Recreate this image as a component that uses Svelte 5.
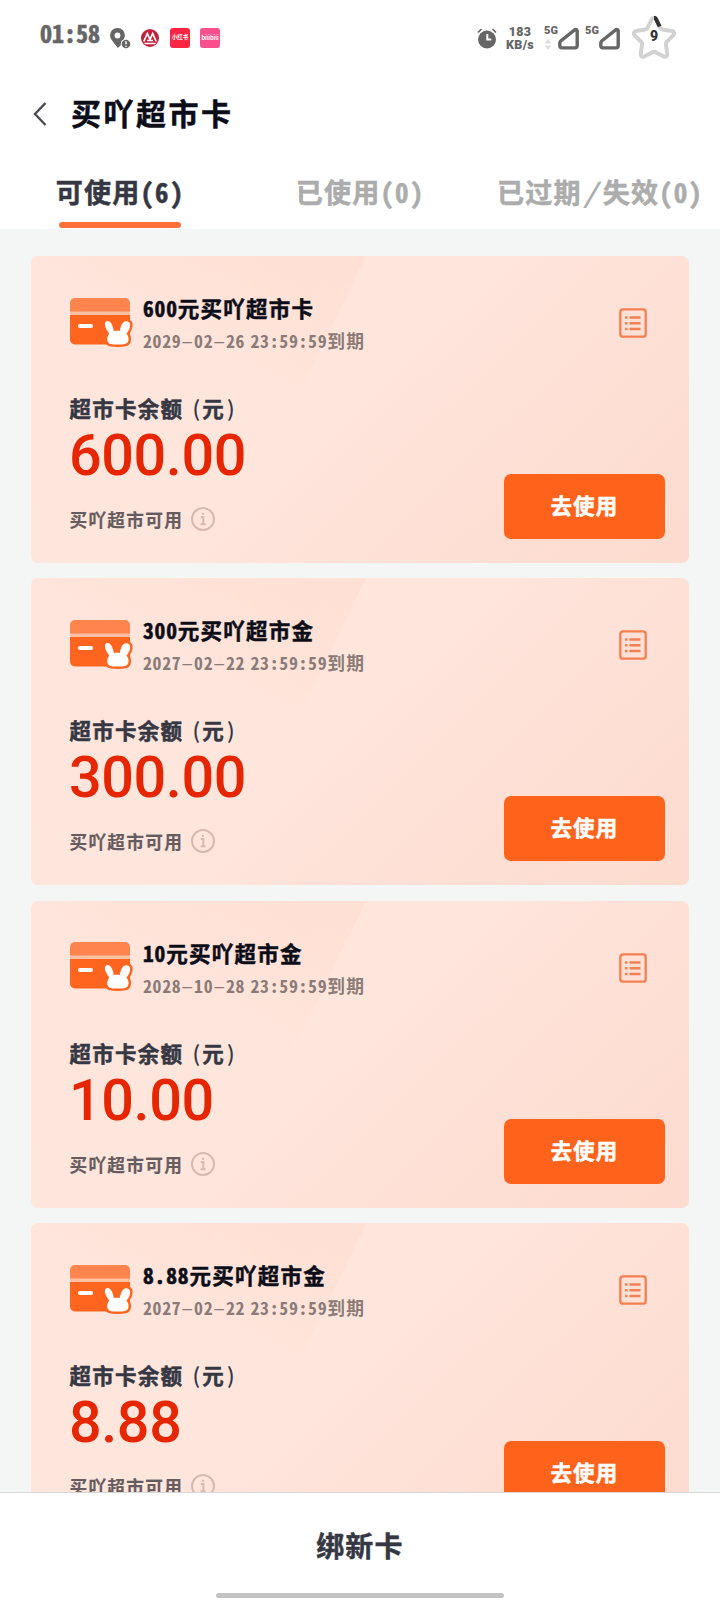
<script lang="ts">
	interface Card {
		id: number;
		title: string;
		expires: string;
		balance: string;
	}

	const TABS = [
		{ id: 'available', label: '可使用(6)' },
		{ id: 'used', label: '已使用(0)' },
		{ id: 'expired', label: '已过期/失效(0)' }
	];

	const CARDS: Card[] = [
		{ id: 1, title: '600元买吖超市卡', expires: '2029-02-26 23:59:59到期', balance: '600.00' },
		{ id: 2, title: '300元买吖超市金', expires: '2027-02-22 23:59:59到期', balance: '300.00' },
		{ id: 3, title: '10元买吖超市金', expires: '2028-10-28 23:59:59到期', balance: '10.00' },
		{ id: 4, title: '8.88元买吖超市金', expires: '2027-02-22 23:59:59到期', balance: '8.88' }
	];

	let active = $state('available');

	// latin runs are set half-width, dashes and slashes get a wider cell
	function runs(text: string) {
		return text.match(/[-/]|[ -,.0-~]+|[^ -~]+/g) ?? [];
	}
	function kind(run: string) {
		if (run === '-') return 'half dash';
		if (run === '/') return 'half slash';
		return /^[ -~]/.test(run) ? 'half' : '';
	}
</script>

{#snippet mixed(text: string)}{#each runs(text) as run}<span class={kind(run)}>{run}</span>{/each}{/snippet}

{#snippet signal()}
	<svg width="22" height="24" viewBox="0 0 22 24" fill="none" stroke="#666" stroke-width="3.4" stroke-linejoin="round">
		<path d="M17 2.6a1.6 1.6 0 0 1 2.2 1.5v15a1.8 1.8 0 0 1-1.8 1.8H3.6a1.8 1.8 0 0 1-1.8-1.8v-3.2c0-.8.3-1.4.9-1.9z" />
	</svg>
{/snippet}

<div class="page">
	<div class="status">
		<span class="clock">01:58</span>
		<svg class="pin" width="21" height="21" viewBox="0 0 21 21">
			<path fill="#666" fill-rule="evenodd" d="M7.5 0a7.3 7.3 0 0 1 7.4 7.3c0 1.5-.4 2.7-1.2 4a5 5 0 0 0-2.8 5.6L7.8 20C5 15.6 0 11.7 0 7.3A7.4 7.4 0 0 1 7.5 0zm0 4.6a2.9 2.9 0 1 0 0 5.8 2.9 2.9 0 0 0 0-5.8z" />
			<circle cx="16" cy="16" r="4.3" fill="#666" />
			<path d="M16 13.3v3" stroke="#fff" stroke-width="1.5" />
			<circle cx="16" cy="18.2" r=".8" fill="#fff" />
		</svg>
		<svg class="bank" width="18" height="18" viewBox="0 0 18 18">
			<circle cx="9" cy="9" r="9" fill="#c4203c" />
			<path d="M2.8 12.5 6.3 4.5l2.7 6 2.7-6 3.5 8M6 11.5h6M3.5 14.5h11" fill="none" stroke="#fff" stroke-width="1.7" />
		</svg>
		<span class="app red">小红书</span>
		<span class="app pink">bilibili</span>
		<span class="grow"></span>
		<svg class="alarm" width="20" height="21" viewBox="0 0 20 21">
			<circle cx="10" cy="11.5" r="9" fill="#666" />
			<path d="M1 4.5 4.5 1M19 4.5 15.5 1" stroke="#666" stroke-width="1.7" />
			<path d="M10.3 6v5.6h4" fill="none" stroke="#fff" stroke-width="2" />
		</svg>
		<span class="speed"><b>183</b><b>KB/s</b></span>
		<span class="net">
			<b>5G</b>
			<svg width="8" height="11" viewBox="0 0 8 11" fill="#ddd"><path d="M4 0l3.5 4.5h-7zM4 11l3.5-4.5h-7z" /></svg>
		</span>
		{@render signal()}
		<span class="net second"><b>5G</b></span>
		{@render signal()}
		<span class="battery">
			<svg width="46" height="44" viewBox="0 0 46 44" fill="none" stroke-width="4" stroke-linejoin="round" stroke-linecap="round">
				<path stroke="#d2d2d2" d="M20.8 4.2a2.5 2.5 0 0 1 4.4 0l4.3 8.8a2.5 2.5 0 0 0 1.9 1.4l9.7 1.5a2.5 2.5 0 0 1 1.3 4.2l-6.8 7.1a2.5 2.5 0 0 0-.7 2.2l1.4 9.5a2.5 2.5 0 0 1-3.6 2.6l-8.5-4.4a2.5 2.5 0 0 0-2.3 0l-8.6 4.4a2.5 2.5 0 0 1-3.6-2.6l1.4-9.5a2.5 2.5 0 0 0-.7-2.2l-6.8-7.1a2.5 2.5 0 0 1 1.3-4.2l9.7-1.5a2.5 2.5 0 0 0 1.9-1.4z" />
				<path stroke="#333" stroke-linecap="butt" d="M23 2.8c1 0 1.6.6 2 1.3l3.6 7.4" />
			</svg>
			<b>9</b>
		</span>
	</div>

	<header class="bar">
		<svg width="14" height="24" viewBox="0 0 14 24" fill="none" stroke="#4a4c52" stroke-width="2.4">
			<path d="M12.5 1 2 12l10.5 11" />
		</svg>
		<h1>买吖超市卡</h1>
	</header>

	<div class="tabs" role="tablist">
		{#each TABS as t (t.id)}
			<button
				type="button"
				role="tab"
				class="tab {active === t.id ? 'is-active' : ''}"
				aria-selected={active === t.id}
				onclick={() => (active = t.id)}
			>
				{@render mixed(t.label)}
			</button>
		{/each}
	</div>

	<main class="list">
		{#each CARDS as card (card.id)}
			<article class="card">
				<div class="info">
					<div class="head">
						<svg width="64" height="49" viewBox="0 0 64 49">
							<path fill="#ff844e" d="M5 0h50a5 5 0 0 1 5 5v9H0V5a5 5 0 0 1 5-5z" />
							<path fill="#ffc0a4" d="M0 13.5h60v3.5H0z" />
							<path fill="#ff651f" d="M0 17h60v24.5a5 5 0 0 1-5 5H5a5 5 0 0 1-5-5z" />
							<rect x="8" y="26" width="15" height="4" rx="2" fill="#fff" />
							<path
								fill="#fff"
								stroke="#ff651f"
								stroke-width="5"
								stroke-linejoin="round"
								paint-order="stroke"
								d="M36.5 23.3c3.5-1.3 6.3 3.2 7.3 9.7 1.700-.5 4.300-.5 6 0C51 26.500 53.500 22 57.800 23.500c4.200 1.800 2.200 8-1.300 12 2 2.800 2.500 4.800 1.800 7.500-.8 3-4.300 3.500-10.800 3.500s-9.200-.5-10-3.500c-.7-2.700 0-4.800 1.700-7.500-3.200-4-6.200-10.500-2.700-12.200z"
							/>
						</svg>
						<div>
							<h2>{@render mixed(card.title)}</h2>
							<p class="expires">{@render mixed(card.expires)}</p>
						</div>
					</div>
					<p class="label">超市卡余额<span class="paren open">(</span>元<span class="paren close">)</span></p>
					<p class="balance">{card.balance}</p>
					<p class="scope">
						买吖超市可用
						<svg width="24" height="24" viewBox="0 0 24 24" fill="none" stroke="#d8b9b0" stroke-width="2">
							<circle cx="12" cy="12" r="11" />
							<path d="M9.8 10h2.5v7.5M9.5 17.3h5.2" />
							<circle cx="12" cy="6.8" r=".8" fill="#d8b9b0" stroke-width="1" />
						</svg>
					</p>
				</div>
				<div class="side">
					<svg width="28" height="30" viewBox="0 0 28 30" fill="none" stroke="#f47f50" stroke-width="2.3">
						<rect x="1.3" y="1.3" width="25.4" height="27.4" rx="2.8" />
						<path stroke-width="2.6" d="M6 9.5h2.5M10.5 9.5h11M6 15.2h2.5M10.5 15.2h11M6 21h2.5M10.5 21h11" />
					</svg>
					<button type="button" class="use">去使用</button>
				</div>
			</article>
		{/each}
	</main>

	<footer class="bottom">
		<button type="button" class="bind">绑新卡</button>
		<span class="home"></span>
	</footer>
</div>

<style>
	:global(body) {
		margin: 0;
	}
	.page {
		width: 720px;
		height: 1600px;
		display: flex;
		flex-direction: column;
		overflow: hidden;
		background: #f4f6f6;
		color: #353742;
		font-family: 'Noto Sans CJK SC', sans-serif;
		font-weight: 700;
		letter-spacing: 0.078em;
	}
	h1,
	h2,
	p {
		margin: 0;
		font-weight: 700;
		white-space: nowrap;
	}
	h1,
	h2,
	.tab,
	.label,
	.scope,
	.use,
	.bind {
		-webkit-text-stroke: 0.5px currentColor;
	}
	button {
		border: none;
		padding: 0;
		background: none;
		font: inherit;
		letter-spacing: inherit;
		color: inherit;
		white-space: nowrap;
	}
	svg {
		display: block;
		flex: none;
	}
	.half {
		font-feature-settings: 'hwid';
		letter-spacing: 0.04em;
	}
	.dash {
		display: inline-block;
		width: 0.71em;
		letter-spacing: 0;
		text-align: center;
		font-weight: 400;
		transform: scaleX(1.9);
	}
	.slash {
		display: inline-block;
		width: 0.77em;
		letter-spacing: 0;
		text-align: center;
		font-weight: 400;
		-webkit-text-stroke: 0;
		transform: scaleX(1.6);
	}

	/* status bar */
	.status {
		display: flex;
		align-items: flex-start;
		height: 76px;
		flex: none;
		box-sizing: border-box;
		padding: 16px 43px 0 40px;
		background: #fff;
		color: #666;
		letter-spacing: 0;
	}
	.clock {
		width: 60px;
		font-size: 24px;
		line-height: 34px;
		font-feature-settings: 'hwid';
		-webkit-text-stroke: 0.6px currentColor;
	}
	.pin {
		margin: 12px 0 0 10px;
	}
	.bank {
		margin: 13px 0 0 10px;
	}
	.app {
		width: 20px;
		height: 20px;
		margin: 12px 0 0 11px;
		border-radius: 3px;
		color: #fff;
		font-size: 5.5px;
		line-height: 19px;
		text-align: center;
	}
	.red {
		background: #fb2442;
	}
	.pink {
		margin-left: 10px;
		background: #f8508c;
		line-height: 21px;
	}
	.grow {
		flex: 1;
	}
	.alarm {
		margin: 12px 8px 0 0;
	}
	.speed {
		display: flex;
		flex-direction: column;
		align-items: center;
		width: 30px;
		margin: 9px 9px 0 0;
		font-family: Roboto, sans-serif;
		font-size: 12.5px;
		line-height: 13px;
		letter-spacing: 0.3px;
	}
	.net {
		display: flex;
		flex-direction: column;
		gap: 2px;
		width: 14px;
		margin-top: 9px;
		font-family: Roboto, sans-serif;
		font-size: 11px;
		line-height: 12px;
	}
	.net.second {
		margin-left: 5px;
	}
	.status > .net + svg {
		margin-top: 11px;
	}
	.battery {
		position: relative;
		margin: -1px 0 0 10px;
	}
	.battery b {
		position: absolute;
		inset: 0;
		color: #333;
		font-family: Roboto, sans-serif;
		font-size: 14px;
		line-height: 43px;
		text-align: center;
	}

	/* title and tabs */
	.bar {
		display: flex;
		align-items: center;
		gap: 24px;
		height: 76px;
		flex: none;
		padding-left: 33px;
		background: #fff;
	}
	h1 {
		margin-top: -5px;
		font-size: 30px;
		line-height: 40px;
		letter-spacing: 0.083em;
		color: #0b0d18;
	}
	.tabs {
		display: grid;
		grid-template-columns: repeat(3, 240px);
		height: 77px;
		flex: none;
		background: #fff;
	}
	.tab {
		padding-top: 19px;
		font-size: 27px;
		line-height: 40px;
		color: #acacac;
	}
	.tab.is-active {
		color: #353742;
	}
	.tab::after {
		content: '';
		display: block;
		width: 122px;
		height: 6px;
		margin: 10px auto 0;
		border-radius: 3px;
	}
	.tab.is-active::after {
		background: #ff6f39;
	}

	/* cards */
	.list {
		flex: 1;
		min-height: 0;
		display: flex;
		flex-direction: column;
		gap: 15.6px;
		padding: 27px 31px 0;
		overflow: hidden;
	}
	.card {
		position: relative;
		z-index: 0;
		display: flex;
		justify-content: space-between;
		flex: none;
		box-sizing: border-box;
		height: 306.9px;
		padding: 36px 24px 23.9px 38.5px;
		border-radius: 7px;
		overflow: hidden;
		background: linear-gradient(136deg, #ffe5dc 10%, #ffe6dd 42%, #fee1d7 65%, #fddbcf 100%);
	}
	/* slanted highlight edge, fades out towards the bottom left */
	.card::before {
		content: '';
		position: absolute;
		z-index: -1;
		top: 0;
		left: 0;
		width: 335px;
		height: 215px;
		clip-path: polygon(0 0, 100% 0, 69% 100%, 0 100%);
		background: linear-gradient(to top right, transparent 45%, rgba(255, 214, 197, 0.42) 100%);
	}
	.head {
		display: flex;
		gap: 9.5px;
	}
	.head svg {
		margin-top: 5.5px;
	}
	h2 {
		font-size: 21.5px;
		line-height: 31px;
		color: #0b0d18;
	}
	.expires {
		margin-top: 2px;
		font-size: 17.8px;
		line-height: 30px;
		word-spacing: -4.2px;
		color: #8a7b78;
	}
	.label {
		margin-top: 38px;
		font-size: 21.5px;
		line-height: 30px;
	}
	.paren {
		display: inline-block;
		font-weight: 500;
		-webkit-text-stroke: 0;
	}
	.open {
		width: 17px;
		letter-spacing: 0;
		text-align: right;
		padding-right: 2px;
	}
	.close {
		padding-left: 2px;
	}
	.balance {
		margin: 3px 0 0 -0.5px;
		font-family: Roboto, sans-serif;
		font-size: 57.5px;
		font-weight: 500;
		line-height: 60px;
		letter-spacing: -0.4px;
		color: #e62600;
	}
	.scope {
		display: flex;
		align-items: center;
		gap: 8px;
		margin-top: 20px;
		font-size: 17.7px;
		line-height: 26px;
		color: #665c5f;
		-webkit-text-stroke-width: 0.2px;
	}
	.side {
		display: flex;
		flex-direction: column;
		justify-content: space-between;
		align-items: flex-end;
	}
	.side svg {
		margin: 16px 18px 0 0;
	}
	.use {
		width: 161px;
		height: 65px;
		padding-bottom: 3px;
		border-radius: 7px;
		background: #ff631b;
		color: #fff;
		font-size: 21.5px;
		line-height: 62px;
	}

	/* bottom action */
	.bottom {
		display: flex;
		flex-direction: column;
		align-items: center;
		justify-content: space-between;
		flex: none;
		box-sizing: border-box;
		height: 108px;
		padding: 32px 0 2px;
		border-top: 1px solid #d6d8d8;
		background: #fff;
	}
	.bind {
		font-size: 28px;
		line-height: 40px;
	}
	.home {
		width: 288px;
		height: 5px;
		border-radius: 3px;
		background: #c2c2c2;
	}
</style>
